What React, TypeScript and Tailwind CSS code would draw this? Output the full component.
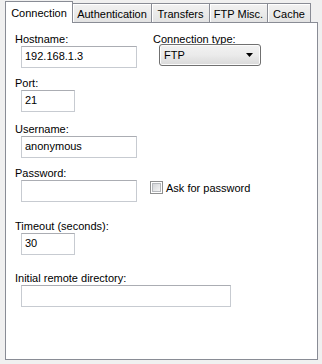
import React from "react";

function TextBox({ w, value }: { w: string; value?: string }) {
  return (
    <div
      className={`${w} h-[22px] ml-[6px] border border-[#c7cbd1] border-t-[#abadb3] bg-white pl-[3px] pt-[3px] leading-[13px] whitespace-nowrap`}
    >
      {value}
    </div>
  );
}

function Label({ children, mt }: { children: React.ReactNode; mt: string }) {
  return <div className={`${mt} h-[13px] leading-[13px] whitespace-nowrap`}>{children}</div>;
}

export default function App() {
  const tabs = [
    { t: "Authentication", w: "w-[79px]" },
    { t: "Transfers", w: "w-[58px]" },
    { t: "FTP Misc.", w: "w-[58px]" },
    { t: "Cache", w: "w-[43px]" },
  ];
  return (
    <div className="w-[322px] h-[364px] bg-[#f0f0f0] text-[11px] text-black font-['Liberation_Sans',Arial,sans-serif]">
      <div className="pl-[5px] pr-[4px] pt-[1px]">
        <div className="flex items-end h-[21px] relative z-10">
          <div className="w-[68px] h-[22px] -mb-[1px] pt-[5px] border border-b-0 border-[#898c95] bg-white leading-[13px] text-center whitespace-nowrap">
            Connection
          </div>
          {tabs.map((t) => (
            <div
              key={t.t}
              className={`${t.w} h-[19px] pt-[4px] border border-b-0 border-l-0 border-[#898c95] bg-gradient-to-b from-[#f2f2f2] to-[#e3e3e3] leading-[13px] text-center whitespace-nowrap shadow-[inset_1px_1px_0_#ffffff]`}
            >
              {t.t}
            </div>
          ))}
        </div>
        <div className="h-[338px] border border-[#898c95] bg-white pl-[9px]">
          <div className="flex">
            <div className="w-[138px] flex flex-col">
              <Label mt="mt-[10px]">Hostname:</Label>
              <TextBox w="w-[116px]" value="192.168.1.3" />
            </div>
            <div className="flex flex-col">
              <Label mt="mt-[10px]">Connection type:</Label>
              <div className="mt-[-2px] ml-[6px] w-[102px] h-[22px] rounded-[3px] border border-[#707070] bg-gradient-to-b from-[#f2f2f2] via-[#ebebeb] to-[#d9d9d9] shadow-[inset_0_0_0_1px_#fcfcfc] flex items-center justify-between pl-[4px] pr-[7px]">
                <span className="leading-[13px]">FTP</span>
                <svg width="7" height="4" viewBox="0 0 7 4">
                  <path d="M0 0H7L3.5 4Z" fill="#000" />
                </svg>
              </div>
            </div>
          </div>
          <Label mt="mt-[9px]">Port:</Label>
          <TextBox w="w-[54px]" value="21" />
          <Label mt="mt-[11px]">Username:</Label>
          <TextBox w="w-[116px]" value="anonymous" />
          <Label mt="mt-[9px]">Password:</Label>
          <div className="flex items-start">
            <TextBox w="w-[116px]" />
            <div className="ml-[13px] mt-[1px] w-[13px] h-[13px] border border-[#8e8f8f] bg-white p-[1px]">
              <div className="w-full h-full border border-[#b6b9bd] bg-gradient-to-br from-[#d4d6d9] to-[#f5f5f5]" />
            </div>
            <div className="ml-[3px] mt-[2px] leading-[13px] whitespace-nowrap">Ask for password</div>
          </div>
          <Label mt="mt-[18px]">Timeout (seconds):</Label>
          <TextBox w="w-[54px]" value="30" />
          <Label mt="mt-[17px]">Initial remote directory:</Label>
          <TextBox w="w-[210px]" />
        </div>
      </div>
    </div>
  );
}
